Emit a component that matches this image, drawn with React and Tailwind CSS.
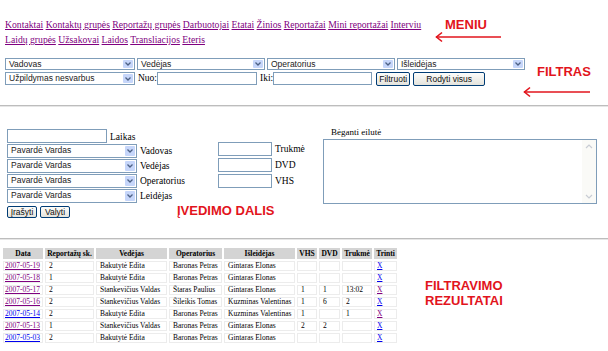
import React from 'react';

const serif = "font-['Liberation_Serif','Times_New_Roman',serif]";
const sans = "font-['Liberation_Sans',Arial,sans-serif]";

const menu = [
  'Kontaktai', 'Kontaktų grupės', 'Reportažų grupės', 'Darbuotojai', 'Etatai', 'Žinios',
  'Reportažai', 'Mini reportažai', 'Interviu', 'Laidų grupės', 'Užsakovai', 'Laidos',
  'Transliacijos', 'Eteris',
];

const rows = [
  ['2007-05-19', '2', 'Bakutytė Edita', 'Baronas Petras', 'Gintaras Elonas', '', '', '', true, false],
  ['2007-05-18', '1', 'Bakutytė Edita', 'Baronas Petras', 'Gintaras Elonas', '', '', '', true, false],
  ['2007-05-17', '2', 'Stankevičius Valdas', 'Štaras Paulius', 'Gintaras Elonas', '1', '1', '13:02', true, true],
  ['2007-05-16', '2', 'Stankevičius Valdas', 'Šileikis Tomas', 'Kuzminas Valentinas', '1', '6', '2', true, false],
  ['2007-05-14', '2', 'Bakutytė Edita', 'Baronas Petras', 'Kuzminas Valentinas', '1', '', '1', false, true],
  ['2007-05-13', '1', 'Stankevičius Valdas', 'Baronas Petras', 'Gintaras Elonas', '2', '2', '', true, false],
  ['2007-05-03', '2', 'Bakutytė Edita', 'Baronas Petras', 'Gintaras Elonas', '', '', '', false, false],
];

const cols = [
  ['Data', 40], ['Reportažų sk.', 49], ['Vedėjas', 71], ['Operatorius', 53], ['Išleidėjas', 71],
  ['VHS', 20], ['DVD', 21], ['Trukmė', 30], ['Trinti', 23],
];

// XP-style combo box
function Select({ value, className }) {
  return (
    <div className={`flex shrink-0 items-stretch border border-[#7f9db9] bg-white ${className}`}>
      <span className={`flex-1 truncate pl-[3px] text-[8.5px] leading-[11px] text-[#222] ${sans}`}>{value}</span>
      <span className="m-px flex w-[10px] items-center justify-center rounded-[1px] bg-[#c6d6fa]">
        <svg width="6" height="4" viewBox="0 0 6 4">
          <polyline points="0.5,0.5 3,3 5.5,0.5" fill="none" stroke="#4d6185" strokeWidth="1.3" />
        </svg>
      </span>
    </div>
  );
}

function Input({ className }) {
  return <div className={`shrink-0 border border-[#7f9db9] bg-white ${className}`} />;
}

function Button({ children, className }) {
  return (
    <div
      className={`flex shrink-0 items-center justify-center rounded-[2px] border border-[#003c74] bg-gradient-to-b from-[#fdfdfb] to-[#e4e3dc] text-[8.5px] text-[#111] ${sans} ${className}`}
    >
      {children}
    </div>
  );
}

function Arrow({ className, w }) {
  return (
    <svg className={`absolute ${className}`} width={w} height="12" viewBox={`0 0 ${w} 12`}>
      <line x1="1" y1="6" x2={w} y2="6" stroke="#e2141c" strokeWidth="1.6" />
      <polyline points="7,1.5 1.5,6 7,10.5" fill="none" stroke="#e2141c" strokeWidth="1.6" />
    </svg>
  );
}

export default function App() {
  return (
    <div className={`relative h-[351px] w-[608px] overflow-hidden bg-white text-black ${serif}`}>
      {/* menu */}
      <div className="w-[440px] pl-[5px] pt-[17px] text-[9.7px] leading-[15px]">
        {menu.map((m, i) => (
          <React.Fragment key={m}>
            <a className="text-[#800080] underline">{m}</a>
            {i < menu.length - 1 && ' '}
          </React.Fragment>
        ))}
      </div>

      {/* filter */}
      <div className="mt-[11px] flex flex-col gap-[2px] pl-[5px]">
        <div className="flex gap-[2px]">
          <Select value="Vadovas" className="h-[12px] w-[130px]" />
          <Select value="Vedėjas" className="h-[12px] w-[128px]" />
          <Select value="Operatorius" className="h-[12px] w-[128px]" />
          <Select value="Išleidėjas" className="h-[12px] w-[128px]" />
        </div>
        <div className="flex items-start">
          <Select value="Užpildymas nesvarbus" className="h-[13px] w-[130px]" />
          <span className="ml-[3px] text-[9.5px] leading-[13px]">Nuo:</span>
          <Input className="h-[13px] w-[100px]" />
          <span className="ml-[3px] text-[9.5px] leading-[13px]">Iki:</span>
          <Input className="h-[13px] w-[99px]" />
          <Button className="ml-[4px] h-[14px] w-[34px]">Filtruoti</Button>
          <Button className="ml-[3px] h-[14px] w-[72px]">Rodyti visus</Button>
        </div>
      </div>

      <div className="mt-[19px] h-[2px] border-t border-b border-t-[#bdbdbd] border-b-[#e6e6e6]" />

      {/* entry */}
      <div className="mt-[19px] flex items-start">
        <div className="flex w-[218px] flex-col pl-[7px] pt-[3px]">
          <div className="flex h-[14px] items-end">
            <Input className="h-[14px] w-[100px]" />
            <span className="ml-[3px] text-[9.5px] leading-[12px]">Laikas</span>
          </div>
          {['Vadovas', 'Vedėjas', 'Operatorius', 'Leidėjas'].map((l) => (
            <div key={l} className="mt-px flex h-[14px] items-start">
              <Select value="Pavardė Vardas" className="h-[14px] w-[130px]" />
              <span className="ml-[3px] pt-px text-[9.5px] leading-[13px]">{l}</span>
            </div>
          ))}
          <div className="mt-[3px] flex gap-[3px]">
            <Button className="h-[12px] w-[30px]">Įrašyti</Button>
            <Button className="h-[12px] w-[30px]">Valyti</Button>
          </div>
        </div>

        <div className="flex w-[102px] flex-col gap-[2px] pt-[16px]">
          {['Trukmė', 'DVD', 'VHS'].map((l) => (
            <div key={l} className="flex h-[14px] items-center">
              <Input className="h-[14px] w-[54px]" />
              <span className="ml-[3px] text-[9.5px] leading-[14px]">{l}</span>
            </div>
          ))}
        </div>

        <div className="ml-[3px] flex flex-col">
          <span className="h-[13px] pl-[8px] text-[9px] leading-[13px]">Bėganti eilutė</span>
          <div className="flex h-[65px] w-[274px] border border-[#7f9db9] bg-white">
            <div className="flex-1" />
            <div className="flex w-[14px] flex-col justify-between bg-[#fafaf7] py-[3px]">
              <svg width="14" height="6" viewBox="0 0 14 6">
                <polyline points="4,5 7,2 10,5" fill="none" stroke="#c8ccd4" strokeWidth="1.2" />
              </svg>
              <svg width="14" height="6" viewBox="0 0 14 6">
                <polyline points="4,1 7,4 10,1" fill="none" stroke="#c8ccd4" strokeWidth="1.2" />
              </svg>
            </div>
          </div>
        </div>
      </div>

      <div className="mt-[20px] h-[2px] border-t border-b border-t-[#bdbdbd] border-b-[#e6e6e6]" />

      {/* results */}
      <div className="mt-[6px] pl-[1px]">
        <table className="table-fixed border-separate border-spacing-[2px] text-[7.5px]">
          <colgroup>
            {cols.map(([c, w]) => (
              <col key={c} style={{ width: w }} />
            ))}
          </colgroup>
          <thead>
            <tr>
              {cols.map(([c]) => (
                <th key={c} className="h-[11px] bg-[#d4d4d4] p-0 text-center font-bold leading-[11px]">
                  {c}
                </th>
              ))}
            </tr>
          </thead>
          <tbody>
            {rows.map((r) => (
              <tr key={r[0]}>
                <td className="h-[10px] border border-[#ececec] p-0 pl-[1px] leading-[8px]">
                  <a className={`underline ${r[8] ? 'text-[#800080]' : 'text-[#0000ee]'}`}>{r[0]}</a>
                </td>
                {r.slice(1, 8).map((v, i) => (
                  <td key={i} className="h-[10px] whitespace-nowrap border border-[#ececec] p-0 pl-[3px] leading-[8px]">
                    {v}
                  </td>
                ))}
                <td className="h-[10px] border border-[#ececec] p-0 pl-[2px] leading-[8px]">
                  <a className={`underline ${r[9] ? 'text-[#800080]' : 'text-[#0000ee]'}`}>X</a>
                </td>
              </tr>
            ))}
          </tbody>
        </table>
      </div>

      {/* annotations */}
      <span className={`absolute left-[445px] top-[17px] text-[13px] font-bold leading-[16px] text-[#e2141c] ${sans}`}>MENIU</span>
      <Arrow className="left-[435px] top-[31px]" w={66} />
      <span className={`absolute left-[537px] top-[64px] text-[13px] font-bold leading-[16px] text-[#e2141c] ${sans}`}>FILTRAS</span>
      <Arrow className="left-[523px] top-[86px]" w={67} />
      <span className={`absolute left-[177px] top-[203px] text-[13px] font-bold leading-[16px] text-[#e2141c] ${sans}`}>ĮVEDIMO DALIS</span>
      <span className={`absolute left-[425px] top-[278px] text-[13px] font-bold leading-[15px] text-[#e2141c] ${sans}`}>
        FILTRAVIMO
        <br />
        REZULTATAI
      </span>
    </div>
  );
}
